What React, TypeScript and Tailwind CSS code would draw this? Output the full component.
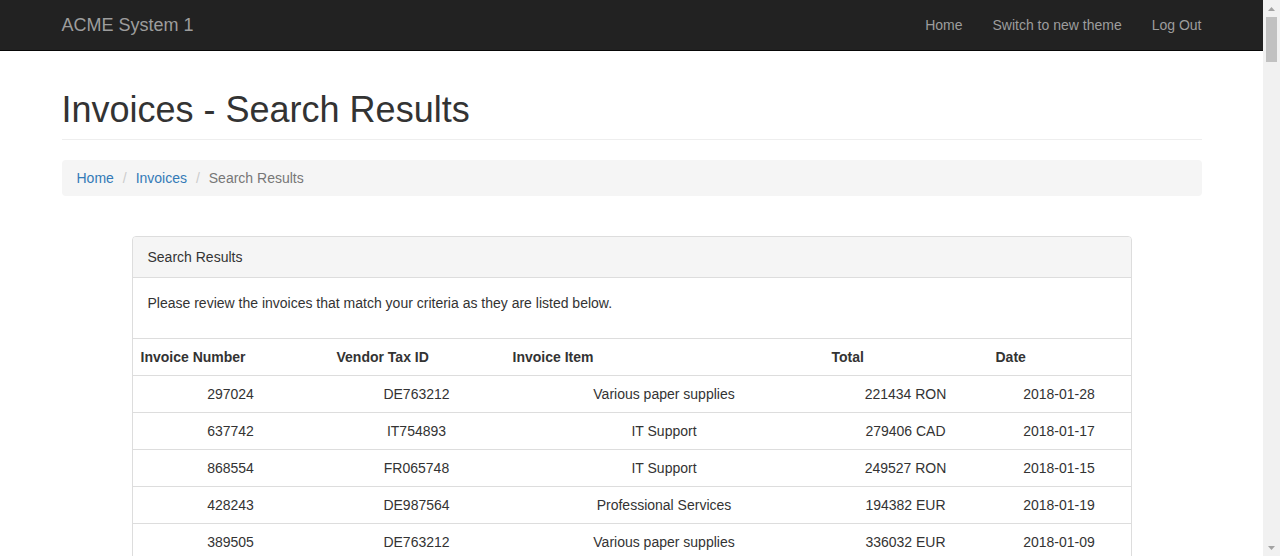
const invoices = [
  { number: '297024', taxId: 'DE763212', item: 'Various paper supplies', total: '221434 RON', date: '2018-01-28' },
  { number: '637742', taxId: 'IT754893', item: 'IT Support', total: '279406 CAD', date: '2018-01-17' },
  { number: '868554', taxId: 'FR065748', item: 'IT Support', total: '249527 RON', date: '2018-01-15' },
  { number: '428243', taxId: 'DE987564', item: 'Professional Services', total: '194382 EUR', date: '2018-01-19' },
  { number: '389505', taxId: 'DE763212', item: 'Various paper supplies', total: '336032 EUR', date: '2018-01-09' },
];

const navLinks = ['Home', 'Switch to new theme', 'Log Out'];

function Navbar() {
  return (
    <nav className="h-[51px] bg-[#222] border-b border-[#080808]">
      <div className="w-[1170px] mx-auto px-[15px] h-[50px] flex items-center justify-between">
        <a className="text-[18px] leading-[20px] text-[#9d9d9d]">ACME System 1</a>
        <ul className="flex -mr-[15px]">
          {navLinks.map((link) => (
            <li key={link}>
              <a className="block px-[15px] py-[15px] text-[14px] leading-[20px] text-[#9d9d9d]">{link}</a>
            </li>
          ))}
        </ul>
      </div>
    </nav>
  );
}

function Separator() {
  return <li className="ml-[4px] px-[5px] text-[#ccc]">/{'\u00a0'}</li>;
}

function Breadcrumb() {
  return (
    <ol className="flex items-center bg-[#f5f5f5] rounded-[4px] px-[15px] py-[8px] leading-[20px] mb-[40px]">
      <li className="text-[#337ab7]">Home</li>
      <Separator />
      <li className="text-[#337ab7]">Invoices</li>
      <Separator />
      <li className="text-[#777]">Search Results</li>
    </ol>
  );
}

function ResultsPanel() {
  return (
    <div className="w-[1000px] mx-auto border border-[#ddd] rounded-[4px] bg-white">
      {/* Panel heading */}
      <div className="bg-[#f5f5f5] border-b border-[#ddd] rounded-t-[3px] px-[15px] py-[10px] leading-[20px]">
        Search Results
      </div>

      {/* Panel body */}
      <div className="p-[15px]">
        <p className="mb-[10px] leading-[20px]">
          Please review the invoices that match your criteria as they are listed below.
        </p>
      </div>

      <table className="w-full table-fixed border-collapse border-t border-[#ddd]">
        <thead>
          <tr className="border-b border-[#ddd]">
            <th className="w-[196px] text-left font-bold p-[8px] leading-[20px]">Invoice Number</th>
            <th className="w-[176px] text-left font-bold p-[8px] leading-[20px]">Vendor Tax ID</th>
            <th className="w-[319px] text-left font-bold p-[8px] leading-[20px]">Invoice Item</th>
            <th className="w-[164px] text-left font-bold p-[8px] leading-[20px]">Total</th>
            <th className="w-[143px] text-left font-bold p-[8px] leading-[20px]">Date</th>
          </tr>
        </thead>
        <tbody>
          {invoices.map((inv) => (
            <tr key={inv.number} className="border-b border-[#ddd]">
              <td className="text-center p-[8px] leading-[20px]">{inv.number}</td>
              <td className="text-center p-[8px] leading-[20px]">{inv.taxId}</td>
              <td className="text-center p-[8px] leading-[20px]">{inv.item}</td>
              <td className="text-center p-[8px] leading-[20px]">{inv.total}</td>
              <td className="text-center p-[8px] leading-[20px]">{inv.date}</td>
            </tr>
          ))}
        </tbody>
      </table>
    </div>
  );
}

// Fake classic scrollbar, the page is clipped to the window
function Scrollbar() {
  return (
    <div className="w-[17px] h-full bg-[#f1f1f1] flex flex-col items-center shrink-0">
      <div className="h-[17px] w-full flex items-center justify-center">
        <svg width="7" height="4" viewBox="0 0 7 4">
          <path d="M0 4 L3.5 0 L7 4 Z" fill="#a3a3a3" />
        </svg>
      </div>
      <div className="w-[11px] h-[45px] bg-[#c1c1c1]" />
      <div className="flex-1" />
      <div className="h-[17px] w-full flex items-center justify-center">
        <svg width="7" height="4" viewBox="0 0 7 4">
          <path d="M0 0 L7 0 L3.5 4 Z" fill="#a3a3a3" />
        </svg>
      </div>
    </div>
  );
}

export default function App() {
  return (
    <div
      className="h-[556px] overflow-hidden flex bg-white text-[14px] text-[#333]"
      style={{ fontFamily: '"Liberation Sans", Arial, Helvetica, sans-serif' }}
    >
      <div className="flex-1 h-full overflow-hidden">
        <Navbar />
        <div className="w-[1170px] mx-auto px-[15px]">
          {/* Page header */}
          <div className="mt-[39px] mb-[20px] pb-[9px] border-b border-[#eee]">
            <h1 className="text-[36px] leading-[1.1] font-normal">Invoices - Search Results</h1>
          </div>
          <Breadcrumb />
        </div>
        <ResultsPanel />
      </div>
      <Scrollbar />
    </div>
  );
}
